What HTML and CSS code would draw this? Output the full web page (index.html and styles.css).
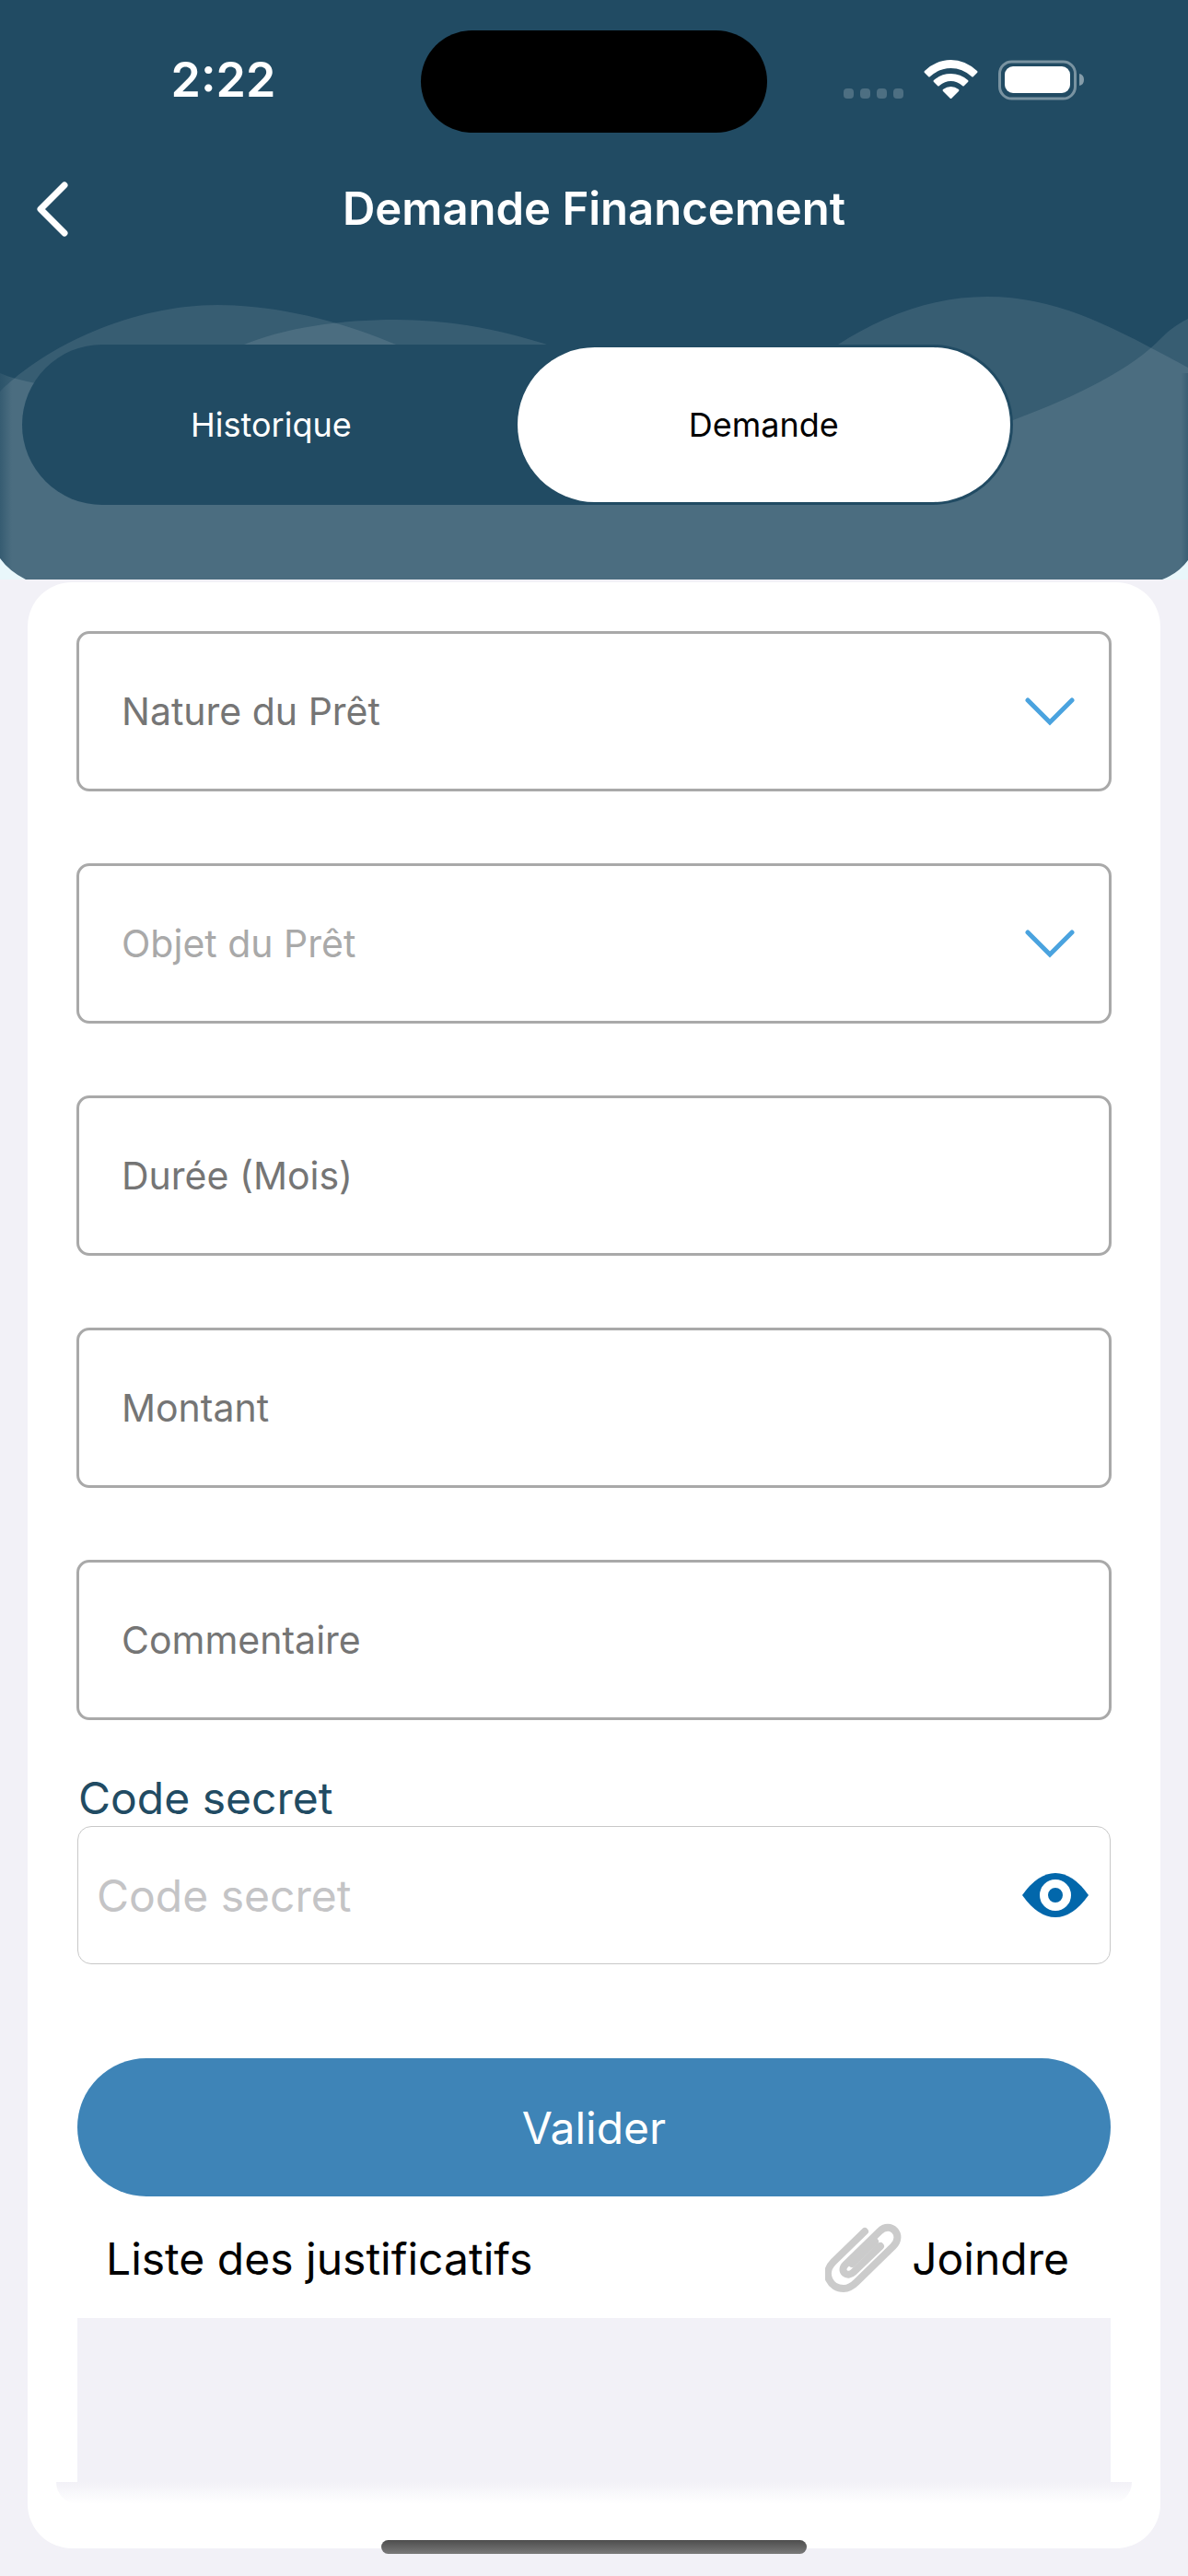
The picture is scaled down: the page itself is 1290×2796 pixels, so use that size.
FILE: index.html
```html
<!DOCTYPE html>
<html lang="fr">
<head>
    <meta charset="UTF-8" />
    <meta name="viewport" content="width=device-width, initial-scale=1.0" />
    <title>Demande Financement</title>
    <link rel="stylesheet" href="styles.css">
</head>
<body>
    <header class="header">
        <!-- Waves behind the tabs -->
        <svg class="waves" viewBox="0 0 1290 329" preserveAspectRatio="none" aria-hidden="true">
            <defs>
                <linearGradient id="edge" x1="0" x2="1" y1="0" y2="0">
                    <stop offset="0" stop-color="#214b63" stop-opacity="0.5" />
                    <stop offset="0.01" stop-color="#214b63" stop-opacity="0" />
                    <stop offset="0.994" stop-color="#214b63" stop-opacity="0" />
                    <stop offset="1" stop-color="#214b63" stop-opacity="0.4" />
                </linearGradient>
            </defs>
            <path class="wave" d="M0 125 C50 75 145 31 236 31 C300 31 370 48 435 76 C540 125 620 150 700 150 C780 150 850 110 910 74 C955 45 1010 22 1072 22 C1150 22 1210 56 1290 99 V329 H0 Z" />
            <path class="wave" d="M0 105 C60 130 160 125 260 76 C310 55 370 47 430 47 C490 47 545 58 600 76 C700 130 820 172 960 172 C1040 172 1070 165 1100 156 C1170 130 1230 100 1262 66 C1272 56 1280 51 1290 46 V329 H0 Z" />
            <rect x="0" y="105" width="1290" height="224" fill="url(#edge)" />
            <path class="corner" d="M0 306 Q10 320 28 329 H0 Z M1290 308 Q1280 322 1262 329 H1290 Z" />
        </svg>

        <div class="status-bar">
            <span class="time">2:22</span>
            <span class="island"></span>
            <svg class="status-icons" viewBox="0 0 262 44" aria-hidden="true">
                <g fill="#fff" fill-opacity="0.2">
                    <rect x="0" y="31" width="11" height="11" rx="4" />
                    <rect x="18" y="31" width="11" height="11" rx="4" />
                    <rect x="36" y="31" width="11" height="11" rx="4" />
                    <rect x="54" y="31" width="11" height="11" rx="4" />
                </g>
                <path fill="#fff" d="M88 12 Q101 0 116.500 0 Q132 0 145 12 Q146 13 145 14 L141 18 Q140 19 139 18 Q129 9 116.500 9 Q104 9 94 18 Q93 19 92 18 L88 14 Q87 13 88 12 Z" />
                <path fill="#fff" d="M98 22 Q106 15 116.500 15 Q127 15 135 22 Q136 23 135 24 L131 28 Q130 29 129 28 Q123 23 116.500 23 Q110 23 104 28 Q103 29 102 28 L98 24 Q97 23 98 22 Z" />
                <path fill="#fff" d="M108 32 Q116.500 26 125 32 Q126 33 125 34 L117 42 L116 42 L108 34 Q107 33 108 32 Z" />
                <rect x="169.500" y="2" width="82" height="40" rx="13" fill="none" stroke="#fff" stroke-opacity="0.4" stroke-width="3" />
                <rect x="175" y="7" width="71" height="29" rx="9" fill="#fff" />
                <path d="M256 15 Q261 16 261 21.500 Q261 27 256 28 Z" fill="#fff" fill-opacity="0.45" />
            </svg>
        </div>

        <div class="nav-bar">
            <button class="back" type="button" aria-label="Retour">
                <svg viewBox="0 0 34 60" aria-hidden="true"><path d="M30 4 L4 30 L30 56" /></svg>
            </button>
            <h1 class="title">Demande Financement</h1>
        </div>

        <div class="tabs" role="tablist">
            <button class="tab" type="button" role="tab" aria-selected="false">Historique</button>
            <button class="tab active" type="button" role="tab" aria-selected="true">Demande</button>
        </div>
    </header>

    <main class="card">
        <form class="form">
            <div class="field">
                <select class="control" aria-label="Nature du Prêt">
                    <option>Nature du Prêt</option>
                </select>
                <svg class="chevron" viewBox="0 0 54 32" aria-hidden="true"><path d="M3 4 L27 28 L51 4" /></svg>
            </div>
            <div class="field">
                <select class="control empty" aria-label="Objet du Prêt">
                    <option>Objet du Prêt</option>
                </select>
                <svg class="chevron" viewBox="0 0 54 32" aria-hidden="true"><path d="M3 4 L27 28 L51 4" /></svg>
            </div>
            <div class="field">
                <input class="control" type="text" placeholder="Durée (Mois)" aria-label="Durée (Mois)" />
            </div>
            <div class="field">
                <input class="control" type="text" placeholder="Montant" aria-label="Montant" />
            </div>
            <div class="field">
                <input class="control" type="text" placeholder="Commentaire" aria-label="Commentaire" />
            </div>

            <label class="secret-label" for="code">Code secret</label>
            <div class="secret">
                <input class="secret-input" id="code" type="password" placeholder="Code secret" />
                <button class="eye" type="button" aria-label="Afficher le code">
                    <svg viewBox="0 0 72 50" aria-hidden="true">
                        <path d="M0 25 Q17 1 36 1 Q55 1 72 25 Q55 49 36 49 Q17 49 0 25 Z" fill="#0267ab" />
                        <circle cx="36" cy="25" r="12.500" fill="#0267ab" stroke="#fff" stroke-width="9" />
                    </svg>
                </button>
            </div>

            <button class="submit" type="submit">Valider</button>
        </form>

        <section class="files">
            <div class="files-head">
                <h2 class="files-title">Liste des justificatifs</h2>
                <button class="attach" type="button">
                    <svg viewBox="0 0 84 76" aria-hidden="true">
                        <path d="M43 9 L9 42 C-4 55 6 71 20 71 C26 71 30 68 34 64 L74 25 C86 13 71 -3 59 9 L22 45 C15 52 24 60 31 53 L60 25" />
                        <path d="M29 44 L54 20" />
                    </svg>
                    Joindre
                </button>
            </div>
            <div class="files-list"></div>
        </section>
        <div class="card-shade"></div>
    </main>

    <div class="home-indicator"></div>
</body>
</html>
```
FILE: styles.css
```css
* {
    box-sizing: border-box;
}
body {
    margin: 0;
    font-family: Inter, "Liberation Sans", sans-serif;
    background-color: #f2f1f7;
    color: #000;
}
button {
    font-family: inherit;
    border: none;
    background: none;
    padding: 0;
}
svg {
    display: block;
}

/* Header */
.header {
    position: relative;
    background-color: #214b63;
    padding-bottom: 81px;
    color: #fff;
}
.waves {
    position: absolute;
    left: 0;
    bottom: 0;
    width: 100%;
    height: 329px;
}
.wave {
    fill: #fff;
    fill-opacity: 0.1;
}
.corner {
    fill: #e9f7fb;
}
.status-bar {
    display: grid;
    grid-template-columns: 1fr 376px 1fr;
    align-items: center;
    padding-top: 33px;
}
.time {
    justify-self: center;
    padding: 0 0 4px 28px;
    font-size: 52px;
    line-height: 60px;
    font-weight: 600;
}
.island {
    height: 111px;
    border-radius: 56px;
    background-color: #000;
}
.status-icons {
    justify-self: center;
    width: 262px;
    height: 44px;
    margin: 0 30px 4px 0;
}
.nav-bar {
    display: grid;
    grid-template-columns: 80px 1fr 80px;
    align-items: center;
    height: 166px;
}
.back {
    padding-left: 40px;
}
.back svg {
    width: 34px;
    height: 60px;
}
.back path {
    fill: none;
    stroke: #fff;
    stroke-width: 7;
    stroke-linecap: round;
    stroke-linejoin: round;
}
.title {
    margin: 0;
    text-align: center;
    font-size: 49px;
    line-height: 60px;
    font-weight: 600;
}
.tabs {
    position: relative;
    display: flex;
    width: calc(84% - 8px);
    height: 174px;
    margin: 64px 0 0 24px;
    padding: 3px;
    border-radius: 87px;
    background-color: #214b63;
}
.tab {
    flex: 1;
    border-radius: 84px;
    font-size: 36px;
    color: #fff;
}
.tab.active {
    background-color: #fff;
    color: #000;
}

/* Card */
.card {
    margin: 3px 30px 30px;
    padding: 53px 0 48px;
    border-radius: 48px;
    background-color: #fff;
}
.form,
.files {
    margin: 0 53px;
}
.form {
    display: flex;
    flex-direction: column;
}
.field {
    display: grid;
    align-items: center;
    margin-bottom: 78px;
}
.control {
    grid-area: 1 / 1;
    width: 100%;
    height: 174px;
    padding: 0 46px;
    border: 3px solid #a9a9a9;
    border-radius: 14px;
    background-color: #fff;
    appearance: none;
    font-family: inherit;
    font-size: 41px;
    color: #757575;
}
.control::placeholder {
    color: #757575;
    opacity: 1;
}
.control.empty {
    color: #a9a9a9;
}
.chevron {
    grid-area: 1 / 1;
    justify-self: end;
    width: 54px;
    height: 32px;
    margin-right: 40px;
    pointer-events: none;
}
.chevron path {
    fill: none;
    stroke: #4aa3df;
    stroke-width: 5;
    stroke-linecap: round;
}
.secret-label {
    margin-top: -23px;
    padding-left: 2px;
    font-size: 48px;
    line-height: 60px;
    color: #214b63;
}
.secret {
    display: flex;
    align-items: center;
    height: 150px;
    margin: 0 1px 102px;
    padding: 0 23px 0 20px;
    border: 1px solid #c8c8c8;
    border-radius: 15px;
}
.secret-input {
    flex: 1;
    min-width: 0;
    padding: 0;
    border: none;
    background: none;
    font-family: inherit;
    font-size: 48px;
}
.secret-input::placeholder {
    color: #c4c4c6;
    opacity: 1;
}
.eye svg {
    width: 72px;
    height: 50px;
}
.submit {
    height: 150px;
    margin: 0 1px;
    border-radius: 75px;
    background-color: #3e84b7;
    font-size: 48px;
    color: #fff;
}
.files-head {
    display: flex;
    align-items: center;
    justify-content: space-between;
    height: 132px;
    padding: 2px 46px 0 32px;
}
.files-title {
    margin: 0;
    font-size: 48px;
    font-weight: 400;
}
.attach {
    display: flex;
    align-items: center;
    gap: 10px;
    font-size: 48px;
    color: #000;
}
.attach svg {
    width: 84px;
    height: 76px;
}
.attach path {
    fill: none;
    stroke: #cbcbcb;
    stroke-width: 8;
    stroke-linecap: round;
}
.files-list {
    height: 178px;
    margin: 0 1px;
    background-color: #f2f1f7;
}
.card-shade {
    height: 24px;
    margin: 0 31px;
    border-radius: 0 0 24px 24px;
    background: linear-gradient(#f2f1f7, #fff);
}
.home-indicator {
    position: fixed;
    left: 50%;
    bottom: 24px;
    width: 462px;
    height: 15px;
    margin-left: -231px;
    border-radius: 8px;
    background: linear-gradient(#4d4d4d, #7a7a7a);
}
```
